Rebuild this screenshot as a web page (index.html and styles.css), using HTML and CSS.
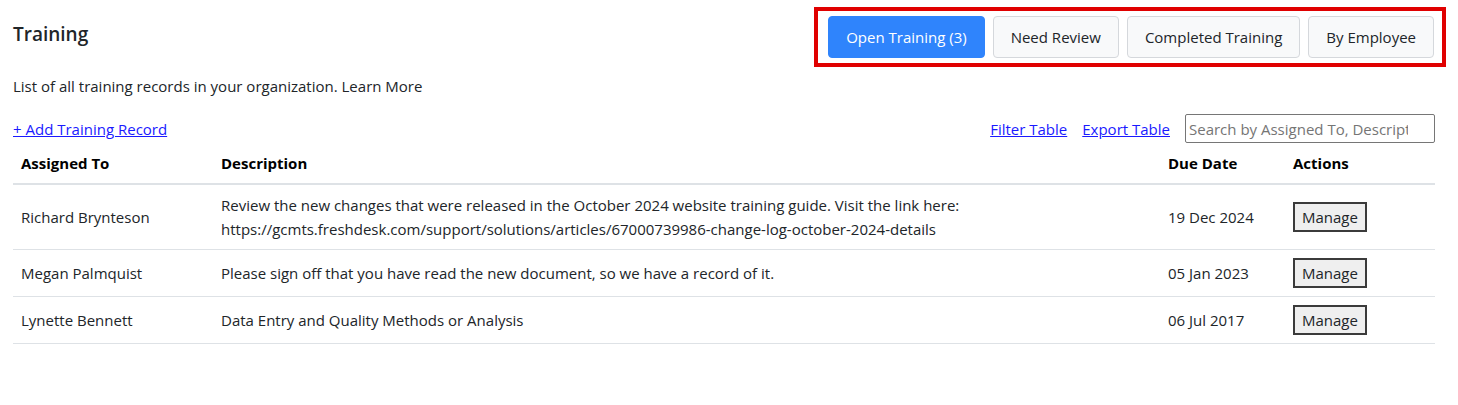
FILE: index.html
```html
<!DOCTYPE html>
<html>
<head>
<meta charset="utf-8">
<link rel="stylesheet" href="styles.css">
</head>
<body>
<div class="page">
  <div class="header">
    <h1 class="title">Training</h1>
    <div class="tabs">
      <button class="tab active">Open Training (3)</button>
      <button class="tab">Need Review</button>
      <button class="tab">Completed Training</button>
      <button class="tab">By Employee</button>
    </div>
  </div>
  <p class="intro">List of all training records in your organization. Learn More</p>
  <div class="toolbar">
    <a class="link" href="#">+ Add Training Record</a>
    <div class="tools">
      <a class="link" href="#">Filter Table</a>
      <a class="link" href="#">Export Table</a>
      <input class="search" type="text" placeholder="Search by Assigned To, Description">
    </div>
  </div>
  <table class="grid">
    <colgroup>
      <col class="c-assigned"><col class="c-desc"><col class="c-due"><col class="c-actions">
    </colgroup>
    <thead>
      <tr><th>Assigned To</th><th>Description</th><th>Due Date</th><th>Actions</th></tr>
    </thead>
    <tbody>
      <tr>
        <td>Richard Brynteson</td>
        <td>Review the new changes that were released in the October 2024 website training guide. Visit the link here:<br>https://gcmts.freshdesk.com/support/solutions/articles/67000739986-change-log-october-2024-details</td>
        <td>19 Dec 2024</td>
        <td><button class="manage">Manage</button></td>
      </tr>
      <tr>
        <td>Megan Palmquist</td>
        <td>Please sign off that you have read the new document, so we have a record of it.</td>
        <td>05 Jan 2023</td>
        <td><button class="manage">Manage</button></td>
      </tr>
      <tr>
        <td>Lynette Bennett</td>
        <td>Data Entry and Quality Methods or Analysis</td>
        <td>06 Jul 2017</td>
        <td><button class="manage">Manage</button></td>
      </tr>
    </tbody>
  </table>
</div>
</body>
</html>
```
FILE: styles.css
```css
* { box-sizing: border-box; }
body {
  margin: 0;
  background: #fff;
  font-family: "Open Sans", "Noto Sans", sans-serif;
  font-size: 15px;
  color: #212529;
}
.page {
  padding: 7px 23px 0 13px;
}
.header {
  display: flex;
  justify-content: space-between;
  align-items: flex-start;
  margin-right: -11px;
}
.title {
  margin: 14px 0 0 0;
  font-size: 19px;
  font-weight: 600;
  line-height: 26px;
}
.tabs {
  display: flex;
  gap: 8px;
  border: 4px solid #e00000;
  padding: 5px 8px 5px 10px;
}
.tab {
  height: 42px;
  padding: 0 17px;
  font-family: inherit;
  font-size: 15px;
  color: #212529;
  background: #f8f9fa;
  border: 1px solid #d5d8dc;
  border-radius: 4px;
}
.tab.active {
  background: #2f84fc;
  border-color: #2f84fc;
  color: #fff;
}
.intro {
  margin: 7px 0 0 0;
  line-height: 24px;
}
.toolbar {
  display: flex;
  justify-content: space-between;
  align-items: center;
  margin-top: 16px;
}
.tools {
  display: flex;
  align-items: center;
  gap: 15px;
}
.link {
  color: #1a1aff;
  text-decoration: underline;
}
.search {
  width: 250px;
  height: 29px;
  border: 1px solid #767676;
  border-radius: 2px;
  padding: 0 26px 0 3px;
  font-family: inherit;
  font-size: 15px;
}
.search::placeholder { color: #757575; }
.grid {
  width: 1422px;
  border-collapse: collapse;
  margin-top: 0;
  table-layout: fixed;
}
.c-assigned { width: 200px; }
.c-desc { width: 947px; }
.c-due { width: 125px; }
.c-actions { width: 150px; }
.grid th, .grid td {
  text-align: left;
  padding: 8px;
  line-height: 24px;
  border-bottom: 1px solid #dee2e6;
  vertical-align: middle;
}
.grid th {
  font-weight: 700;
  color: #000;
  border-bottom-width: 2px;
}
.grid td { color: #212529; }
.manage {
  font-family: inherit;
  font-size: 15px;
  color: #212529;
  background: #efefef;
  border: 2px solid #3b3b3b;
  padding: 1px 7px;
  height: 30px;
}
```
